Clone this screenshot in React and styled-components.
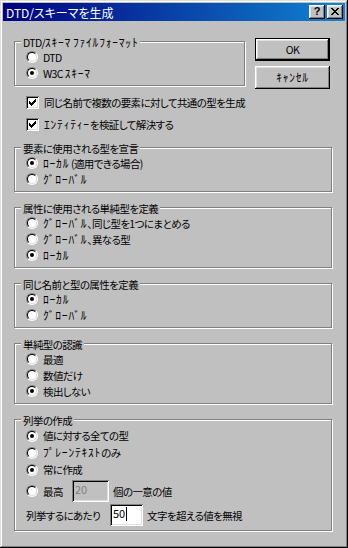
import React from 'react';
import styled, { createGlobalStyle } from 'styled-components';

const GlobalStyle = createGlobalStyle`
  html, body {
    margin: 0;
    padding: 0;
    background: #c0c0c0;
  }
  body {
    font-family: "Noto Sans CJK JP", "Liberation Sans", sans-serif;
    font-size: 10.5px;
    font-weight: 400;
    line-height: 13px;
    letter-spacing: -0.6px;
    color: #000;
    font-feature-settings: "palt";
  }
`;

const Dialog = styled.div`
  width: 348px;
  height: 548px;
  box-sizing: border-box;
  padding: 3px;
  background: #c0c0c0;
  box-shadow: inset -1px -1px #000, inset 1px 1px #dfdfdf,
    inset -2px -2px #808080, inset 2px 2px #fff;
  display: flex;
  flex-direction: column;
`;

const TitleBar = styled.div`
  height: 18px;
  display: flex;
  align-items: center;
  padding: 0 2px 0 3px;
  background: linear-gradient(90deg, #000080, #1084d0);
  color: #fff;
  font-size: 12px;
  letter-spacing: 0;
`;

const TitleText = styled.span`
  flex: 1;
  white-space: nowrap;
`;

const TitleButtons = styled.div`
  display: flex;
  gap: 2px;
`;

const TitleButton = styled.div`
  width: 16px;
  height: 14px;
  box-sizing: border-box;
  background: #c0c0c0;
  box-shadow: inset -1px -1px #000, inset 1px 1px #fff,
    inset -2px -2px #808080, inset 2px 2px #dfdfdf;
  display: flex;
  align-items: center;
  justify-content: center;
  color: #000;
  font-family: "Liberation Sans", sans-serif;
  font-weight: 700;
  font-size: 11px;
  line-height: 11px;
  padding-bottom: 1px;
`;

const Hankaku = styled.span`
  font-size: 11.5px;
  letter-spacing: 0.8px;
  font-feature-settings: normal;
`;

const Text = ({ children }) =>
  String(children)
    .split(/([\uFF61-\uFF9F]+)/)
    .filter(Boolean)
    .map((part, i) =>
      /[\uFF61-\uFF9F]/.test(part) ? <Hankaku key={i}>{part}</Hankaku> : <span key={i}>{part}</span>
    );

const Body = styled.div`
  display: flex;
  flex-direction: column;
  padding: 17px 13px 0 11px;
`;

const TopRow = styled.div`
  display: flex;
  gap: 10px;
`;

const LeftCol = styled.div`
  width: 231px;
  display: flex;
  flex-direction: column;
`;

const GroupBox = styled.div`
  position: relative;
  box-sizing: border-box;
  border: 1px solid #808080;
  box-shadow: 1px 1px 0 #fff, inset 1px 1px 0 #fff;
  padding: 7px 0 4px 11px;
  margin-top: ${(p) => p.$mt || 0}px;
`;

const Legend = styled.span`
  position: absolute;
  top: -6px;
  left: 6px;
  padding: 0 2px;
  background: #c0c0c0;
  line-height: 13px;
  white-space: nowrap;
`;

const OptionRow = styled.div`
  display: flex;
  align-items: center;
  gap: 5px;
  height: ${(p) => p.$h || 16}px;
  white-space: nowrap;
`;

const RadioOuter = styled.span`
  width: 12px;
  height: 12px;
  box-sizing: border-box;
  border-radius: 50%;
  border: 1px solid;
  border-color: #808080 #fff #fff #808080;
  flex-shrink: 0;
  display: flex;
`;

const RadioInner = styled.span`
  flex: 1;
  box-sizing: border-box;
  border-radius: 50%;
  border: 1px solid;
  border-color: #000 #dfdfdf #dfdfdf #000;
  background: #fff;
  display: flex;
  align-items: center;
  justify-content: center;
`;

const Dot = styled.span`
  width: 4px;
  height: 4px;
  border-radius: 50%;
  background: #000;
`;

const Radio = ({ checked }) => (
  <RadioOuter>
    <RadioInner>{checked && <Dot />}</RadioInner>
  </RadioOuter>
);

const CheckRow = styled.div`
  display: flex;
  align-items: center;
  gap: 5px;
  height: 22px;
  padding-left: 12px;
  white-space: nowrap;
  margin-top: ${(p) => p.$mt || 0}px;
`;

const sunken = `
  box-shadow: inset 1px 1px #808080, inset -1px -1px #fff,
    inset 2px 2px #000, inset -2px -2px #dfdfdf;
`;

const CheckBoxFrame = styled.span`
  width: 13px;
  height: 13px;
  box-sizing: border-box;
  background: #fff;
  ${sunken}
  display: flex;
  align-items: center;
  justify-content: center;
  flex-shrink: 0;
`;

const CheckBox = () => (
  <CheckBoxFrame>
    <svg width="7" height="7" viewBox="0 0 7 7" shapeRendering="crispEdges">
      <path
        fill="#000"
        d="M6 0h1v1H6zM5 1h2v1H5zM0 2h1v1H0zM4 2h3v1H4zM0 3h2v1H0zM3 3h3v1H3zM0 4h5v1H0zM1 5h3v1H1zM2 6h1v1H2z"
      />
    </svg>
  </CheckBoxFrame>
);

const ButtonCol = styled.div`
  display: flex;
  flex-direction: column;
  gap: 5px;
`;

const Button = styled.div`
  width: 75px;
  height: 23px;
  box-sizing: border-box;
  background: #c0c0c0;
  display: flex;
  align-items: center;
  justify-content: center;
  border: ${(p) => (p.$default ? '1px solid #000' : 'none')};
  box-shadow: inset -1px -1px #000, inset 1px 1px #fff,
    inset -2px -2px #808080, inset 2px 2px #dfdfdf;
  white-space: nowrap;
`;

const Groups = styled.div`
  display: flex;
  flex-direction: column;
  gap: 15px;
  margin-top: 12px;
`;

const FieldRow = styled.div`
  display: flex;
  align-items: center;
  height: 22px;
  margin-top: 2px;
  white-space: nowrap;
`;

const Field = styled.div`
  width: ${(p) => p.$w}px;
  height: 22px;
  box-sizing: border-box;
  padding: 3px 3px 0;
  font-size: 11px;
  letter-spacing: 0;
  background: ${(p) => (p.$disabled ? '#c0c0c0' : '#fff')};
  color: ${(p) => (p.$disabled ? '#808080' : '#000')};
  ${sunken}
  margin: 0 4px 0 ${(p) => p.$ml || 0}px;
  display: flex;
  align-items: flex-start;
`;

const Caret = styled.span`
  width: 1px;
  height: 14px;
  background: #000;
  margin-left: 1px;
`;

const FieldLabel = styled.span`
  width: ${(p) => p.$w}px;
  margin-left: ${(p) => p.$ml || 0}px;
`;

const RadioGroup = ({ title, items, mt, h }) => (
  <GroupBox $mt={mt}>
    <Legend>
      <Text>{title}</Text>
    </Legend>
    {items.map(([label, checked]) => (
      <OptionRow key={label} $h={h}>
        <Radio checked={checked} />
        <span>
          <Text>{label}</Text>
        </span>
      </OptionRow>
    ))}
  </GroupBox>
);

export default function App() {
  return (
    <>
      <GlobalStyle />
      <Dialog>
        <TitleBar>
          <TitleText>DTD/スキーマを生成</TitleText>
          <TitleButtons>
            <TitleButton>?</TitleButton>
            <TitleButton>
              <svg width="8" height="7" viewBox="0 0 8 7" shapeRendering="crispEdges">
                <path
                  fill="#000"
                  d="M0 0h2v1H0zM6 0h2v1H6zM1 1h2v1H1zM5 1h2v1H5zM2 2h4v1H2zM3 3h2v1H3zM2 4h4v1H2zM1 5h2v1H1zM5 5h2v1H5zM0 6h2v1H0zM6 6h2v1H6z"
                />
              </svg>
            </TitleButton>
          </TitleButtons>
        </TitleBar>
        <Body>
          <TopRow>
            <LeftCol>
              <RadioGroup
                mt={3}
                title="DTD/ｽｷｰﾏ ﾌｧｲﾙﾌｫｰﾏｯﾄ"
                items={[
                  ['DTD', false],
                  ['W3C ｽｷｰﾏ', true],
                ]}
              />
              <CheckRow $mt={5}>
                <CheckBox />
                <span>同じ名前で複数の要素に対して共通の型を生成</span>
              </CheckRow>
              <CheckRow>
                <CheckBox />
                <span>
                  <Text>ｴﾝﾃｨﾃｨｰを検証して解決する</Text>
                </span>
              </CheckRow>
            </LeftCol>
            <ButtonCol>
              <Button $default>OK</Button>
              <Button>
                <Text>ｷｬﾝｾﾙ</Text>
              </Button>
            </ButtonCol>
          </TopRow>
          <Groups>
            <RadioGroup
              title="要素に使用される型を宣言"
              items={[
                ['ﾛｰｶﾙ (適用できる場合)', true],
                ['ｸﾞﾛｰﾊﾞﾙ', false],
              ]}
            />
            <RadioGroup
              title="属性に使用される単純型を定義"
              items={[
                ['ｸﾞﾛｰﾊﾞﾙ、同じ型を1つにまとめる', false],
                ['ｸﾞﾛｰﾊﾞﾙ、異なる型', false],
                ['ﾛｰｶﾙ', true],
              ]}
            />
            <RadioGroup
              title="同じ名前と型の属性を定義"
              items={[
                ['ﾛｰｶﾙ', true],
                ['ｸﾞﾛｰﾊﾞﾙ', false],
              ]}
            />
            <RadioGroup
              title="単純型の認識"
              items={[
                ['最適', false],
                ['数値だけ', false],
                ['検出しない', true],
              ]}
            />
            <GroupBox>
              <Legend>列挙の作成</Legend>
              <OptionRow $h={17}>
                <Radio checked />
                <span>値に対する全ての型</span>
              </OptionRow>
              <OptionRow $h={17}>
                <Radio />
                <span>
                  <Text>ﾌﾟﾚｰﾝﾃｷｽﾄのみ</Text>
                </span>
              </OptionRow>
              <OptionRow $h={17}>
                <Radio checked />
                <span>常に作成</span>
              </OptionRow>
              <FieldRow>
                <Radio />
                <FieldLabel $w={29} $ml={5}>最高</FieldLabel>
                <Field $w={37} $disabled>20</Field>
                <span>個の一意の値</span>
              </FieldRow>
              <FieldRow>
                <FieldLabel $w={84}>列挙するにあたり</FieldLabel>
                <Field $w={33}>
                  50
                  <Caret />
                </Field>
                <span>文字を超える値を無視</span>
              </FieldRow>
            </GroupBox>
          </Groups>
        </Body>
      </Dialog>
    </>
  );
}
